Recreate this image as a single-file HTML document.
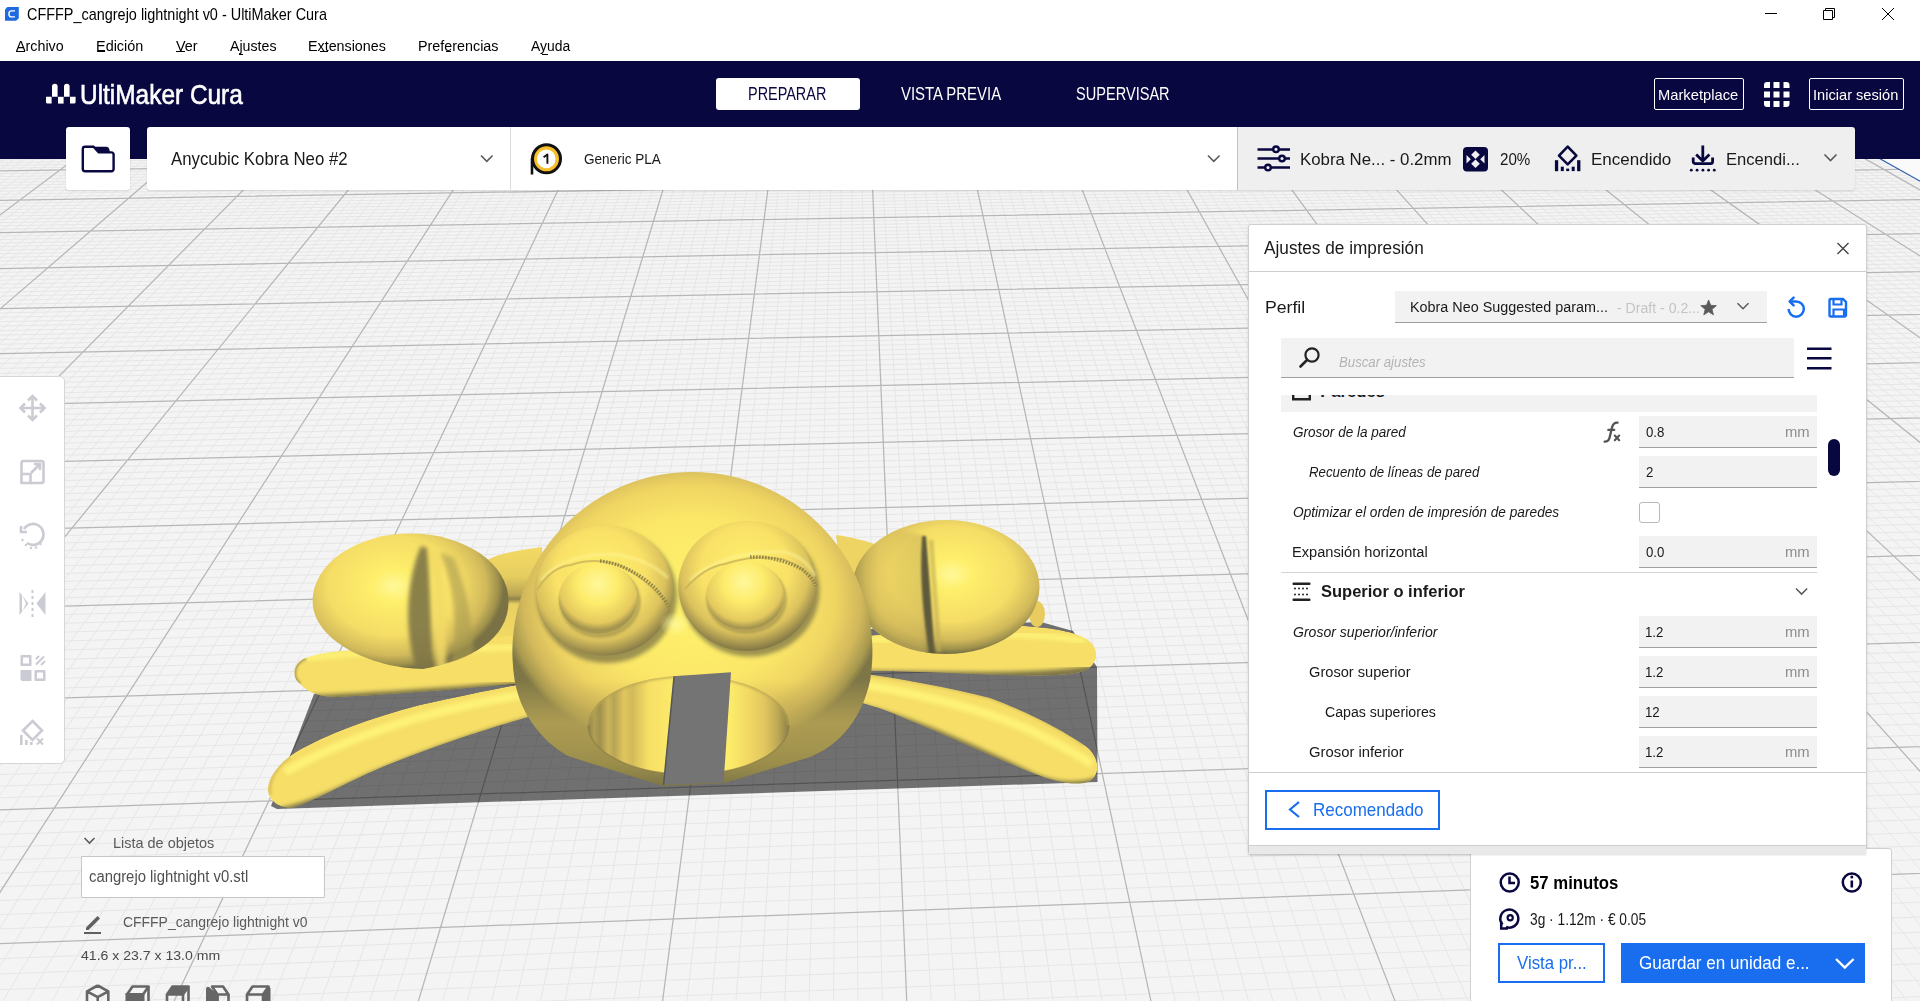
<!DOCTYPE html>
<html><head><meta charset="utf-8"><style>
*{margin:0;padding:0;box-sizing:border-box}
html,body{width:1920px;height:1001px;overflow:hidden;background:#fafafa;font-family:"Liberation Sans", sans-serif}
.t{position:absolute;white-space:pre;line-height:1;transform-origin:0 0}
.a{position:absolute}
svg{position:absolute;left:0;top:0}
</style></head><body>
<svg width="1920" height="1001" viewBox="0 0 1920 1001">
<polygon points="-293.1,143.6 1798.3,112.9 3843.4,1259.4 -3274.2,1618.4" fill="#f4f4f4"/>
<path d="M-283.1 143.4L-3235.2 1616.4M-273.1 143.3L-3196.2 1614.5M-263.1 143.1L-3157.3 1612.5M-253.1 143.0L-3118.5 1610.6M-243.2 142.8L-3079.8 1608.6M-233.2 142.7L-3041.1 1606.7M-223.2 142.5L-3002.5 1604.7M-213.2 142.4L-2964.0 1602.8M-203.3 142.3L-2925.5 1600.8M-183.4 142.0L-2848.9 1597.0M-173.4 141.8L-2810.7 1595.0M-163.5 141.7L-2772.5 1593.1M-153.6 141.5L-2734.4 1591.2M-143.6 141.4L-2696.4 1589.3M-133.7 141.2L-2658.5 1587.4M-123.8 141.1L-2620.7 1585.5M-113.9 140.9L-2582.9 1583.5M-104.0 140.8L-2545.2 1581.6M-84.2 140.5L-2470.0 1577.9M-74.3 140.4L-2432.5 1576.0M-64.4 140.2L-2395.1 1574.1M-54.5 140.1L-2357.7 1572.2M-44.6 139.9L-2320.4 1570.3M-34.8 139.8L-2283.2 1568.4M-24.9 139.6L-2246.1 1566.6M-15.0 139.5L-2209.0 1564.7M-5.2 139.3L-2172.0 1562.8M14.5 139.1L-2098.3 1559.1M24.3 138.9L-2061.5 1557.3M34.2 138.8L-2024.8 1555.4M44.0 138.6L-1988.1 1553.6M53.8 138.5L-1951.5 1551.7M63.6 138.3L-1915.0 1549.9M73.5 138.2L-1878.6 1548.0M83.3 138.0L-1842.2 1546.2M93.1 137.9L-1805.9 1544.4M112.7 137.6L-1733.5 1540.7M122.4 137.5L-1697.4 1538.9M132.2 137.3L-1661.4 1537.1M142.0 137.2L-1625.4 1535.3M151.8 137.0L-1589.5 1533.5M161.5 136.9L-1553.7 1531.6M171.3 136.8L-1518.0 1529.8M181.1 136.6L-1482.3 1528.0M190.8 136.5L-1446.6 1526.2M210.3 136.2L-1375.6 1522.7M220.0 136.0L-1340.1 1520.9M229.8 135.9L-1304.8 1519.1M239.5 135.8L-1269.5 1517.3M249.2 135.6L-1234.2 1515.5M258.9 135.5L-1199.1 1513.8M268.6 135.3L-1164.0 1512.0M278.3 135.2L-1128.9 1510.2M288.0 135.0L-1094.0 1508.5M307.4 134.8L-1024.2 1504.9M317.1 134.6L-989.4 1503.2M326.8 134.5L-954.7 1501.4M336.4 134.3L-920.1 1499.7M346.1 134.2L-885.5 1497.9M355.8 134.0L-850.9 1496.2M365.4 133.9L-816.5 1494.5M375.1 133.8L-782.1 1492.7M384.7 133.6L-747.7 1491.0M404.0 133.3L-679.3 1487.5M413.6 133.2L-645.1 1485.8M423.2 133.1L-611.0 1484.1M432.9 132.9L-577.0 1482.4M442.5 132.8L-543.0 1480.7M452.1 132.6L-509.1 1479.0M461.7 132.5L-475.3 1477.3M471.3 132.3L-441.5 1475.6M480.9 132.2L-407.8 1473.9M500.1 131.9L-340.6 1470.5M509.7 131.8L-307.0 1468.8M519.2 131.6L-273.6 1467.1M528.8 131.5L-240.1 1465.4M538.4 131.4L-206.8 1463.7M547.9 131.2L-173.5 1462.0M557.5 131.1L-140.3 1460.4M567.0 130.9L-107.1 1458.7M576.6 130.8L-74.0 1457.0M595.7 130.5L-7.9 1453.7M605.2 130.4L25.0 1452.0M614.7 130.2L57.9 1450.4M624.2 130.1L90.7 1448.7M633.7 130.0L123.5 1447.1M643.3 129.8L156.2 1445.4M652.8 129.7L188.8 1443.8M662.3 129.5L221.4 1442.1M671.8 129.4L253.9 1440.5M690.7 129.1L318.8 1437.2M700.2 129.0L351.1 1435.6M709.7 128.8L383.4 1433.9M719.2 128.7L415.7 1432.3M728.6 128.6L447.9 1430.7M738.1 128.4L480.0 1429.1M747.5 128.3L512.0 1427.5M757.0 128.2L544.1 1425.8M766.4 128.0L576.0 1424.2M785.3 127.7L639.7 1421.0M794.7 127.6L671.5 1419.4M804.2 127.5L703.3 1417.8M813.6 127.3L734.9 1416.2M823.0 127.2L766.6 1414.6M832.4 127.0L798.1 1413.0M841.8 126.9L829.6 1411.4M851.2 126.8L861.1 1409.9M860.6 126.6L892.5 1408.3M879.4 126.4L955.1 1405.1M888.8 126.2L986.3 1403.5M898.1 126.1L1017.5 1402.0M907.5 125.9L1048.6 1400.4M916.9 125.8L1079.7 1398.8M926.2 125.7L1110.7 1397.3M935.6 125.5L1141.7 1395.7M945.0 125.4L1172.6 1394.1M954.3 125.3L1203.5 1392.6M973.0 125.0L1265.0 1389.5M982.3 124.8L1295.7 1387.9M991.6 124.7L1326.3 1386.4M1001.0 124.6L1356.9 1384.8M1010.3 124.4L1387.5 1383.3M1019.6 124.3L1418.0 1381.8M1028.9 124.2L1448.4 1380.2M1038.2 124.0L1478.8 1378.7M1047.5 123.9L1509.1 1377.2M1066.1 123.6L1569.6 1374.1M1075.4 123.5L1599.8 1372.6M1084.6 123.3L1629.9 1371.1M1093.9 123.2L1659.9 1369.6M1103.2 123.1L1690.0 1368.1M1112.5 122.9L1719.9 1366.5M1121.7 122.8L1749.8 1365.0M1131.0 122.7L1779.7 1363.5M1140.2 122.5L1809.5 1362.0M1158.7 122.3L1869.0 1359.0M1167.9 122.1L1898.6 1357.5M1177.2 122.0L1928.3 1356.0M1186.4 121.8L1957.8 1354.5M1195.6 121.7L1987.3 1353.1M1204.8 121.6L2016.8 1351.6M1214.0 121.4L2046.2 1350.1M1223.3 121.3L2075.5 1348.6M1232.5 121.2L2104.9 1347.1M1250.8 120.9L2163.3 1344.2M1260.0 120.8L2192.5 1342.7M1269.2 120.6L2221.6 1341.2M1278.4 120.5L2250.7 1339.8M1287.6 120.4L2279.7 1338.3M1296.7 120.2L2308.6 1336.8M1305.9 120.1L2337.6 1335.4M1315.1 120.0L2366.4 1333.9M1324.2 119.8L2395.3 1332.5M1342.5 119.6L2452.8 1329.6M1351.7 119.4L2481.4 1328.1M1360.8 119.3L2510.1 1326.7M1369.9 119.1L2538.6 1325.3M1379.0 119.0L2567.2 1323.8M1388.2 118.9L2595.7 1322.4M1397.3 118.7L2624.1 1320.9M1406.4 118.6L2652.5 1319.5M1415.5 118.5L2680.8 1318.1M1433.7 118.2L2737.4 1315.2M1442.8 118.1L2765.6 1313.8M1451.9 117.9L2793.7 1312.4M1461.0 117.8L2821.8 1311.0M1470.1 117.7L2849.9 1309.6M1479.1 117.5L2877.9 1308.1M1488.2 117.4L2905.9 1306.7M1497.3 117.3L2933.8 1305.3M1506.3 117.1L2961.7 1303.9M1524.4 116.9L3017.3 1301.1M1533.5 116.7L3045.0 1299.7M1542.5 116.6L3072.7 1298.3M1551.6 116.5L3100.4 1296.9M1560.6 116.3L3128.0 1295.5M1569.6 116.2L3155.6 1294.1M1578.6 116.1L3183.1 1292.7M1587.7 116.0L3210.5 1291.4M1596.7 115.8L3238.0 1290.0M1614.7 115.6L3292.7 1287.2M1623.7 115.4L3320.0 1285.8M1632.7 115.3L3347.2 1284.5M1641.7 115.2L3374.4 1283.1M1650.7 115.0L3401.6 1281.7M1659.6 114.9L3428.7 1280.4M1668.6 114.8L3455.7 1279.0M1677.6 114.6L3482.8 1277.6M1686.6 114.5L3509.7 1276.3M1704.5 114.2L3563.6 1273.6M1713.4 114.1L3590.4 1272.2M1722.4 114.0L3617.2 1270.9M1731.3 113.8L3644.0 1269.5M1740.3 113.7L3670.7 1268.2M1749.2 113.6L3697.4 1266.8M1758.1 113.4L3724.0 1265.5M1767.1 113.3L3750.6 1264.1M1776.0 113.2L3777.2 1262.8M-293.1 143.6L1798.3 112.9M-298.4 146.2L1802.4 115.2M-309.1 151.5L1810.9 119.9M-314.5 154.2L1815.1 122.3M-320.0 156.9L1819.4 124.7M-325.5 159.6L1823.8 127.1M-331.1 162.4L1828.1 129.6M-336.8 165.2L1832.6 132.1M-342.5 168.0L1837.0 134.6M-348.2 170.8L1841.5 137.1M-354.0 173.7L1846.1 139.6M-365.8 179.5L1855.3 144.8M-371.7 182.5L1859.9 147.4M-377.8 185.4L1864.6 150.1M-383.9 188.5L1869.4 152.7M-390.0 191.5L1874.2 155.4M-396.2 194.6L1879.0 158.1M-402.5 197.7L1883.9 160.9M-408.9 200.8L1888.9 163.6M-415.3 204.0L1893.9 166.4M-428.3 210.4L1904.0 172.1M-434.9 213.7L1909.1 175.0M-441.6 217.0L1914.3 177.9M-448.3 220.3L1919.5 180.8M-455.1 223.7L1924.8 183.8M-462.0 227.1L1930.1 186.8M-469.0 230.6L1935.5 189.8M-476.0 234.0L1941.0 192.8M-483.1 237.6L1946.5 195.9M-497.6 244.7L1957.6 202.2M-504.9 248.3L1963.3 205.4M-512.3 252.0L1969.0 208.6M-519.8 255.7L1974.8 211.8M-527.4 259.5L1980.6 215.1M-535.1 263.3L1986.5 218.4M-542.9 267.1L1992.5 221.7M-550.7 271.0L1998.5 225.1M-558.7 274.9L2004.6 228.5M-574.8 282.9L2017.0 235.5M-583.0 287.0L2023.3 239.0M-591.3 291.1L2029.6 242.6M-599.8 295.3L2036.1 246.2M-608.3 299.5L2042.6 249.8M-616.9 303.7L2049.1 253.5M-625.6 308.0L2055.8 257.2M-634.4 312.4L2062.5 261.0M-643.3 316.8L2069.3 264.8M-661.5 325.8L2083.1 272.5M-670.7 330.4L2090.1 276.5M-680.1 335.0L2097.2 280.5M-689.6 339.7L2104.4 284.5M-699.2 344.5L2111.7 288.6M-708.9 349.3L2119.0 292.7M-718.8 354.1L2126.4 296.8M-728.7 359.1L2134.0 301.1M-738.8 364.1L2141.6 305.3M-759.4 374.3L2157.1 314.0M-769.9 379.5L2165.0 318.4M-780.5 384.7L2173.0 322.9M-791.3 390.0L2181.0 327.5M-802.2 395.4L2189.2 332.0M-813.3 400.9L2197.5 336.7M-824.5 406.5L2205.9 341.4M-835.9 412.1L2214.4 346.2M-847.4 417.8L2223.0 351.0M-870.9 429.4L2240.5 360.8M-882.9 435.4L2249.4 365.8M-895.1 441.4L2258.5 370.9M-907.5 447.5L2267.7 376.0M-920.0 453.7L2276.9 381.2M-932.7 460.0L2286.3 386.5M-945.6 466.4L2295.9 391.8M-958.7 472.8L2305.5 397.3M-972.0 479.4L2315.3 402.7M-999.1 492.8L2335.3 413.9M-1013.0 499.7L2345.5 419.7M-1027.1 506.7L2355.8 425.4M-1041.4 513.7L2366.3 431.3M-1055.9 520.9L2376.9 437.3M-1070.6 528.2L2387.7 443.3M-1085.6 535.6L2398.6 449.4M-1100.8 543.2L2409.7 455.6M-1116.3 550.8L2420.9 462.0M-1147.9 566.5L2443.9 474.8M-1164.1 574.5L2455.6 481.4M-1180.6 582.6L2467.6 488.1M-1197.4 590.9L2479.6 494.9M-1214.4 599.4L2491.9 501.8M-1231.7 607.9L2504.4 508.7M-1249.3 616.6L2517.0 515.8M-1267.2 625.5L2529.9 523.0M-1285.4 634.5L2542.9 530.3M-1322.8 653.0L2569.6 545.3M-1342.0 662.5L2583.3 553.0M-1361.6 672.2L2597.2 560.8M-1381.5 682.0L2611.3 568.7M-1401.7 692.0L2625.6 576.7M-1422.3 702.2L2640.2 584.9M-1443.3 712.6L2655.0 593.2M-1464.7 723.2L2670.1 601.6M-1486.5 734.0L2685.4 610.2M-1531.4 756.2L2716.8 627.8M-1554.5 767.6L2732.9 636.9M-1578.0 779.2L2749.3 646.1M-1602.0 791.1L2766.0 655.4M-1626.5 803.2L2783.0 664.9M-1651.5 815.6L2800.3 674.6M-1676.9 828.2L2817.9 684.5M-1702.9 841.1L2835.8 694.5M-1729.5 854.2L2854.0 704.8M-1784.3 881.3L2891.5 725.8M-1812.6 895.3L2910.8 736.6M-1841.5 909.6L2930.4 747.6M-1871.0 924.2L2950.5 758.8M-1901.2 939.1L2970.9 770.3M-1932.0 954.4L2991.7 782.0M-1963.6 970.0L3012.9 793.9M-1995.9 986.0L3034.6 806.0M-2028.9 1002.3L3056.7 818.4M-2097.4 1036.2L3102.2 843.9M-2132.8 1053.7L3125.7 857.1M-2169.1 1071.7L3149.7 870.5M-2206.4 1090.1L3174.2 884.3M-2244.5 1109.0L3199.2 898.3M-2283.6 1128.3L3224.7 912.6M-2323.7 1148.2L3250.9 927.3M-2364.9 1168.5L3277.6 942.2M-2407.1 1189.4L3304.9 957.5M-2495.0 1232.9L3361.3 989.2M-2540.8 1255.5L3390.6 1005.6M-2587.8 1278.8L3420.5 1022.4M-2636.1 1302.7L3451.1 1039.5M-2685.9 1327.3L3482.5 1057.1M-2737.0 1352.6L3514.6 1075.1M-2789.7 1378.7L3547.5 1093.6M-2843.9 1405.5L3581.3 1112.5M-2899.8 1433.2L3615.9 1131.9M-3016.8 1491.1L3687.8 1172.2M-3078.1 1521.4L3725.1 1193.2M-3141.4 1552.7L3763.5 1214.7M-3206.7 1585.0L3802.9 1236.8M-3274.2 1618.4L3843.4 1259.4" stroke="#e6e6e6" stroke-width="1" fill="none"/>
<path d="M-293.1 143.6L-3274.2 1618.4M-193.3 142.1L-2887.2 1598.9M-94.1 140.6L-2507.5 1579.7M4.7 139.2L-2135.1 1561.0M102.9 137.8L-1769.7 1542.5M200.5 136.3L-1411.1 1524.4M297.7 134.9L-1059.1 1506.7M394.4 133.5L-713.5 1489.3M490.5 132.1L-374.2 1472.2M586.1 130.7L-40.9 1455.3M681.2 129.3L286.4 1438.8M775.9 127.9L607.9 1422.6M870.0 126.5L923.8 1406.7M963.6 125.1L1234.3 1391.0M1056.8 123.7L1539.4 1375.6M1149.5 122.4L1839.3 1360.5M1241.7 121.0L2134.1 1345.7M1333.4 119.7L2424.0 1331.0M1424.6 118.3L2709.1 1316.7M1515.4 117.0L2989.5 1302.5M1605.7 115.7L3265.3 1288.6M1695.5 114.4L3536.7 1274.9M1784.9 113.1L3803.7 1261.5M-303.7 148.8L1806.6 117.5M-359.9 176.6L1850.6 142.2M-421.7 207.2L1898.9 169.3M-490.3 241.1L1952.0 199.0M-566.7 278.9L2010.8 232.0M-652.3 321.3L2076.1 268.6M-749.1 369.1L2149.3 309.7M-859.1 423.6L2231.7 355.9M-985.4 486.1L2325.2 408.3M-1132.0 558.6L2432.3 468.3M-1304.0 643.7L2556.2 537.8M-1508.7 745.0L2701.0 619.0M-1756.6 867.6L2872.6 715.2M-2062.7 1019.1L3079.2 831.0M-2450.5 1210.9L3332.8 973.2M-2957.4 1461.7L3651.4 1151.8" stroke="#b6b6b6" stroke-width="1.25" fill="none"/>
<path d="M1798.3 112.9L3843.4 1259.4" stroke="#2a5bb0" stroke-width="1.2" fill="none"/>
<defs>
<radialGradient id="gClawL" cx="394" cy="586" r="110" gradientUnits="userSpaceOnUse" gradientTransform="translate(394 586) scale(1 0.75) translate(-394 -586)">
<stop offset="0" stop-color="#fff89a"/><stop offset="0.2" stop-color="#feef6b"/><stop offset="0.6" stop-color="#f5dd66"/><stop offset="0.84" stop-color="#d1b95b"/><stop offset="0.95" stop-color="#9e914c"/><stop offset="1" stop-color="#7a7244"/>
</radialGradient>
<radialGradient id="gClawR" cx="952" cy="574" r="104" gradientUnits="userSpaceOnUse" gradientTransform="translate(952 574) scale(1 0.76) translate(-952 -574)">
<stop offset="0" stop-color="#fff89a"/><stop offset="0.2" stop-color="#feef6b"/><stop offset="0.6" stop-color="#f5dd66"/><stop offset="0.84" stop-color="#d1b95b"/><stop offset="0.95" stop-color="#9e914c"/><stop offset="1" stop-color="#7a7244"/>
</radialGradient>
<radialGradient id="gBody" cx="692" cy="600" r="192" gradientUnits="userSpaceOnUse" gradientTransform="translate(692 600) scale(1 0.8) translate(-692 -600)">
<stop offset="0" stop-color="#fff46c"/><stop offset="0.55" stop-color="#fbe668"/><stop offset="0.75" stop-color="#efd462"/><stop offset="0.88" stop-color="#d2b85b"/><stop offset="0.96" stop-color="#a8994f"/><stop offset="1" stop-color="#7e7646"/>
</radialGradient>
<radialGradient id="gEyeL" cx="600" cy="575" r="82" gradientUnits="userSpaceOnUse">
<stop offset="0" stop-color="#fef06b"/><stop offset="0.55" stop-color="#f9e167"/><stop offset="0.8" stop-color="#dac15d"/><stop offset="1" stop-color="#857a47"/>
</radialGradient>
<radialGradient id="gEyeR" cx="745" cy="570" r="80" gradientUnits="userSpaceOnUse">
<stop offset="0" stop-color="#fef06b"/><stop offset="0.55" stop-color="#f9e167"/><stop offset="0.8" stop-color="#dac15d"/><stop offset="1" stop-color="#857a47"/>
</radialGradient>
<radialGradient id="gBallL" cx="598" cy="584" r="46" gradientUnits="userSpaceOnUse">
<stop offset="0" stop-color="#fff89a"/><stop offset="0.45" stop-color="#fdeb6a"/><stop offset="0.85" stop-color="#e4c95f"/><stop offset="1" stop-color="#a5954f"/>
</radialGradient>
<radialGradient id="gBallR" cx="744" cy="582" r="46" gradientUnits="userSpaceOnUse">
<stop offset="0" stop-color="#fff89a"/><stop offset="0.45" stop-color="#fdeb6a"/><stop offset="0.85" stop-color="#e4c95f"/><stop offset="1" stop-color="#a5954f"/>
</radialGradient>
<linearGradient id="gLL" x1="404" y1="702" x2="424" y2="757" gradientUnits="userSpaceOnUse">
<stop offset="0" stop-color="#e0c65e"/><stop offset="0.22" stop-color="#fff57a"/><stop offset="0.55" stop-color="#fae368"/><stop offset="0.78" stop-color="#d4bb5b"/><stop offset="0.92" stop-color="#9a8d4b"/><stop offset="1" stop-color="#6e6842"/>
</linearGradient>
<linearGradient id="gLU" x1="0" y1="648" x2="0" y2="698" gradientUnits="userSpaceOnUse">
<stop offset="0" stop-color="#e9cd60"/><stop offset="0.25" stop-color="#fef06b"/><stop offset="0.55" stop-color="#f9e267"/><stop offset="0.76" stop-color="#d1b95b"/><stop offset="0.9" stop-color="#9a8d4b"/><stop offset="1" stop-color="#6e6842"/>
</linearGradient>
<linearGradient id="gRU" x1="0" y1="626" x2="0" y2="677" gradientUnits="userSpaceOnUse">
<stop offset="0" stop-color="#e9cd60"/><stop offset="0.25" stop-color="#fef06b"/><stop offset="0.55" stop-color="#f9e267"/><stop offset="0.76" stop-color="#d1b95b"/><stop offset="0.9" stop-color="#9a8d4b"/><stop offset="1" stop-color="#6e6842"/>
</linearGradient>
<linearGradient id="gRL" x1="975" y1="690" x2="958" y2="745" gradientUnits="userSpaceOnUse">
<stop offset="0" stop-color="#e0c65e"/><stop offset="0.22" stop-color="#fff57a"/><stop offset="0.55" stop-color="#fae368"/><stop offset="0.78" stop-color="#d4bb5b"/><stop offset="0.92" stop-color="#9a8d4b"/><stop offset="1" stop-color="#6e6842"/>
</linearGradient>
<linearGradient id="gMouth" x1="588" y1="0" x2="789" y2="0" gradientUnits="userSpaceOnUse">
<stop offset="0" stop-color="#8b7f48"/><stop offset="0.03" stop-color="#b19f52"/><stop offset="0.06" stop-color="#a0914e"/><stop offset="0.1" stop-color="#ccb55a"/><stop offset="0.13" stop-color="#b7a454"/><stop offset="0.18" stop-color="#e1c65e"/><stop offset="0.22" stop-color="#d2ba5b"/><stop offset="0.3" stop-color="#f7df66"/><stop offset="0.45" stop-color="#fded6a"/><stop offset="0.7" stop-color="#fded6a"/><stop offset="0.8" stop-color="#f2d864"/><stop offset="0.88" stop-color="#e1c65e"/><stop offset="0.94" stop-color="#c0ab56"/><stop offset="1" stop-color="#8b7f48"/>
</linearGradient>
<linearGradient id="gLow" x1="0" y1="680" x2="0" y2="786" gradientUnits="userSpaceOnUse">
<stop offset="0" stop-color="#c5af58" stop-opacity="0"/><stop offset="0.4" stop-color="#bba755" stop-opacity="0.75"/><stop offset="0.8" stop-color="#9a8d4b"/><stop offset="1" stop-color="#7e7646"/>
</linearGradient>
<linearGradient id="gLip" x1="0" y1="674" x2="0" y2="700" gradientUnits="userSpaceOnUse">
<stop offset="0" stop-color="#e1c65e"/><stop offset="1" stop-color="#e1c65e" stop-opacity="0"/>
</linearGradient>
<linearGradient id="gBand" x1="0" y1="740" x2="0" y2="786" gradientUnits="userSpaceOnUse">
<stop offset="0" stop-color="#c5af58" stop-opacity="0"/><stop offset="0.5" stop-color="#b19f52"/><stop offset="1" stop-color="#8b7f48"/>
</linearGradient>
<linearGradient id="gGroove" x1="405" y1="0" x2="465" y2="0" gradientUnits="userSpaceOnUse">
<stop offset="0" stop-color="#cab359" stop-opacity="0"/><stop offset="0.18" stop-color="#8a7e48"/><stop offset="0.33" stop-color="#9b8d4d"/><stop offset="0.45" stop-color="#ecd162"/><stop offset="0.62" stop-color="#c2ad57"/><stop offset="0.8" stop-color="#b6a354"/><stop offset="1" stop-color="#d9c05d" stop-opacity="0"/>
</linearGradient>
<linearGradient id="gClawRL" x1="855" y1="0" x2="935" y2="0" gradientUnits="userSpaceOnUse">
<stop offset="0" stop-color="#b4a153" stop-opacity="0.5"/><stop offset="0.3" stop-color="#e8cc60" stop-opacity="0.5"/><stop offset="0.85" stop-color="#cab359" stop-opacity="0.6"/><stop offset="1" stop-color="#6a6440"/>
</linearGradient>
<clipPath id="cClawL"><ellipse cx="410.6" cy="601" rx="98" ry="67.5"/></clipPath>
<clipPath id="cClawR"><ellipse cx="946" cy="587" rx="93.5" ry="67"/></clipPath>
<clipPath id="cMouth"><ellipse cx="688.5" cy="725" rx="100.5" ry="49.5"/></clipPath>
<radialGradient id="gNose" cx="0.5" cy="0.5" r="0.5"><stop offset="0" stop-color="#fff89a" stop-opacity="0.85"/><stop offset="1" stop-color="#fff89a" stop-opacity="0"/></radialGradient>
<clipPath id="cBody"><path d="M514.6 680 A180 180 0 1 1 870.2 680 C862 718 840 745 810 757 L724 783 L663 786 L568 756 C540 740 520 712 514.6 680z"/></clipPath>
<filter id="fb2" x="-50%" y="-10%" width="200%" height="120%"><feGaussianBlur stdDeviation="2.2"/></filter>
<filter id="fb1" x="-50%" y="-10%" width="200%" height="120%"><feGaussianBlur stdDeviation="1"/></filter>
<linearGradient id="gBackL" x1="0" y1="548" x2="0" y2="650" gradientUnits="userSpaceOnUse">
<stop offset="0" stop-color="#f3da65"/><stop offset="0.28" stop-color="#e6cd60"/><stop offset="0.46" stop-color="#b8a454"/><stop offset="0.5" stop-color="#8e8249"/><stop offset="0.55" stop-color="#e8cf62"/><stop offset="0.9" stop-color="#f3da65"/><stop offset="1" stop-color="#d4bb5b"/>
</linearGradient>
<clipPath id="cLU"><path d="M300 684 C291 678 293 662 306 658 C322 651 350 650 400 647 L505 636 L545 640 L545 681 C480 687 420 693 340 697 C318 698 306 691 300 684z"/></clipPath><clipPath id="cRU"><path d="M865 636 L1000 625 C1040 626 1070 630 1085 638 C1099 646 1100 661 1088 669 C1075 676 1050 676 1000 675 C950 673 900 671 865 671z"/></clipPath><clipPath id="cLL"><path d="M292 808 C276 808 267 798 268 788 C269 776 280 762 296 752 C325 735 370 718 420 705 C460 696 500 688 522 684 L548 700 L532 716 C490 728 445 742 390 764 C350 780 318 800 292 808z"/></clipPath><clipPath id="cRL"><path d="M856 673 C900 678 950 688 990 698 C1030 713 1062 730 1084 745 C1100 755 1102 776 1088 782 C1075 786 1055 782 1035 774 C995 758 950 737 892 713 C880 708 866 704 856 702z"/></clipPath>
</defs>
<!-- shadow -->
<polygon points="314,694 600,640 1041,622 1073,631 1097,667 1097.5,782 277,809 271,806" fill="#000" fill-opacity="0.54"/>
<!-- back legs behind body -->
<path d="M484 562 C495 554 520 550 542 547 L548 684 L486 684z" fill="url(#gBackL)"/>
<path d="M836 535 C850 537 868 541 880 546 L885 610 L850 640z" fill="#eed463"/>
<ellipse cx="1037" cy="614" rx="8" ry="13" fill="#e8cc60"/>
<!-- upper legs -->
<g clip-path="url(#cLU)">
<path d="M300 684 C291 678 293 662 306 658 C322 651 350 650 400 647 L505 636 L545 640 L545 681 C480 687 420 693 340 697 C318 698 306 691 300 684z" fill="#f6de67"/>
<path d="M290 700 C330 700 420 694 545 684" stroke="#7e7646" stroke-width="9" fill="none" filter="url(#fb2)"/>
<path d="M296 660 C320 654 380 652 545 646" stroke="#fff57a" stroke-width="7" fill="none" filter="url(#fb2)" opacity="0.8"/>
<path d="M300 684 C291 678 293 662 306 658" stroke="#b8a454" stroke-width="4" fill="none" filter="url(#fb1)"/>
</g>
<g clip-path="url(#cRU)">
<path d="M865 636 L1000 625 C1040 626 1070 630 1085 638 C1099 646 1100 661 1088 669 C1075 676 1050 676 1000 675 C950 673 900 671 865 671z" fill="#f6de67"/>
<path d="M860 675 C950 676 1050 680 1102 668" stroke="#7e7646" stroke-width="9" fill="none" filter="url(#fb2)"/>
<path d="M870 640 C950 634 1040 630 1085 642" stroke="#fff57a" stroke-width="7" fill="none" filter="url(#fb2)" opacity="0.8"/>
</g>
<!-- lower legs -->
<g clip-path="url(#cLL)">
<path d="M292 808 C276 808 267 798 268 788 C269 776 280 762 296 752 C325 735 370 718 420 705 C460 696 500 688 522 684 L548 700 L532 716 C490 728 445 742 390 764 C350 780 318 800 292 808z" fill="#f6de67"/>
<path d="M280 812 C320 804 350 784 392 768 C445 746 490 732 540 718" stroke="#7e7646" stroke-width="8" fill="none" filter="url(#fb2)"/>
<path d="M285 772 C320 752 370 732 420 717 C460 706 500 698 540 692" stroke="#fff57a" stroke-width="9" fill="none" filter="url(#fb2)" opacity="0.85"/>
<path d="M270 795 C268 780 276 766 290 757" stroke="#d4bb5b" stroke-width="4" fill="none" filter="url(#fb1)" opacity="0.7"/>
</g>
<g clip-path="url(#cRL)">
<path d="M856 673 C900 678 950 688 990 698 C1030 713 1062 730 1084 745 C1100 755 1102 776 1088 782 C1075 786 1055 782 1035 774 C995 758 950 737 892 713 C880 708 866 704 856 702z" fill="#f6de67"/>
<path d="M850 706 C900 716 960 742 1035 778 C1060 788 1085 788 1104 778" stroke="#7e7646" stroke-width="8" fill="none" filter="url(#fb2)"/>
<path d="M860 684 C920 694 980 708 1030 730 C1060 745 1080 756 1092 764" stroke="#fff57a" stroke-width="9" fill="none" filter="url(#fb2)" opacity="0.85"/>
<path d="M856 673 C900 678 950 688 990 698 C1030 713 1062 730 1084 745" stroke="#d4bb5b" stroke-width="3" fill="none" filter="url(#fb1)" opacity="0.7"/>
</g>
<!-- claws -->
<path d="M312.6 601 A98 67.5 0 0 1 508.6 601 C508.6 640 470 660 423 669 C370 668 312.6 640 312.6 601z" fill="url(#gClawL)"/>
<g clip-path="url(#cClawL)"><g filter="url(#fb2)">
<path d="M421 546 C406 580 404 630 416 668 L434 668 C430 630 431 585 427 548z" fill="#7e7646" opacity="0.9"/>
<path d="M430 550 C436 590 434 630 436 668 L446 668 C447 630 446 590 438 552z" fill="#f3da65" opacity="0.8"/>
<path d="M440 552 C456 590 458 630 450 668 L474 668 C474 630 468 590 454 558z" fill="#a89a50" opacity="0.6"/>
</g></g>
<ellipse cx="946" cy="587" rx="93.5" ry="67" fill="url(#gClawR)"/>
<g clip-path="url(#cClawR)">
<path d="M850 520 L922 535 C924 580 927 620 931 660 L850 660z" fill="url(#gClawRL)" filter="url(#fb2)"/>
<path d="M922 536 C919 580 924 620 929 654 L935 654 C932 620 930 580 926 536z" fill="#5f5a3a" filter="url(#fb1)"/>
<path d="M931 540 C934 580 937 620 939 652" stroke="#c2ad57" stroke-width="5" fill="none" opacity="0.6" filter="url(#fb1)"/>
</g>
<!-- body -->
<path d="M514.6 680 A180 180 0 1 1 870.2 680 C862 718 840 745 810 757 L724 783 L663 786 L568 756 C540 740 520 712 514.6 680z" fill="url(#gBody)"/>
<!-- eye sockets -->
<ellipse cx="607" cy="596" rx="70" ry="67" fill="#7e7646" opacity="0.75" filter="url(#fb2)"/>
<ellipse cx="750" cy="591" rx="69.5" ry="65.5" fill="#7e7646" opacity="0.75" filter="url(#fb2)"/>
<ellipse cx="604.7" cy="590.6" rx="68.5" ry="65" fill="url(#gEyeL)"/>
<ellipse cx="747" cy="586" rx="68.7" ry="65" fill="url(#gEyeR)"/>
<ellipse cx="600" cy="602" rx="41" ry="36" fill="#8e8249" opacity="0.5" filter="url(#fb1)"/>
<ellipse cx="746.5" cy="599" rx="40.5" ry="35" fill="#8e8249" opacity="0.5" filter="url(#fb1)"/>
<ellipse cx="598" cy="598.5" rx="39.3" ry="35" fill="url(#gBallL)"/>
<ellipse cx="745" cy="596" rx="39" ry="33.5" fill="url(#gBallR)"/>
<path d="M541 580 C556 562 585 552 618 555 C640 558 655 566 668 578" stroke="#fff69a" stroke-width="3" fill="none" opacity="0.55" filter="url(#fb1)"/>
<path d="M690 580 C712 560 748 550 785 552 C800 556 810 566 815 576" stroke="#fff69a" stroke-width="3" fill="none" opacity="0.55" filter="url(#fb1)"/>
<path d="M537 590 C548 572 560 566 571 565 C590 558 615 560 632 572 C648 582 660 595 669 607" stroke="#c9b35a" stroke-width="2" fill="none" opacity="0.8"/>
<path d="M600 561 C620 563 640 574 655 588 C662 596 666 602 669 607" stroke="#8a7e48" stroke-width="3.5" fill="none" stroke-dasharray="1.6 1.4" opacity="0.9"/>
<path d="M685 589 C698 574 712 566 725 564 C745 557 768 556 782 559 C797 564 809 573 816 586" stroke="#c9b35a" stroke-width="2" fill="none" opacity="0.8"/>
<path d="M750 557 C770 556 790 562 803 570 C810 576 814 581 816 586" stroke="#8a7e48" stroke-width="3.5" fill="none" stroke-dasharray="1.6 1.4" opacity="0.9"/>
<ellipse cx="675" cy="624" rx="16" ry="12" fill="url(#gNose)"/>
<!-- mouth -->
<rect x="500" y="680" width="380" height="110" fill="url(#gLow)" clip-path="url(#cBody)"/>
<ellipse cx="688.5" cy="725" rx="100.5" ry="49.5" fill="url(#gMouth)"/>
<g clip-path="url(#cMouth)">
<path d="M588 725 A100.5 49.5 0 0 1 789 725" stroke="#b8a454" stroke-width="4" fill="none" opacity="0.7" filter="url(#fb1)"/>

</g>
<path d="M588 725 A100.5 49.5 0 0 0 789 725" stroke="#8b7f48" stroke-width="1.5" fill="none" opacity="0.7"/>
<polygon points="674.1,676.2 731,672.2 723.6,782.6 663.6,784.8" fill="#747474"/>
<path d="M674.1 676.2 L663.6 784.8" stroke="#555" stroke-width="1.5"/>

</svg>
<!-- title + menu -->
<div class="a" style="left:0;top:0;width:1920px;height:61px;background:#fff"></div>

<svg class="a" style="left:0;top:0" width="30" height="30" viewBox="0 0 30 30"><path d="M7.3 7H18.8V18.3L16.1 20.8H5V9.5z" fill="#1f6ae0"/><path d="M15 10.9H11.6A2.7 3 0 0 0 11.6 16.9H15" stroke="#fff" stroke-width="1.4" fill="none"/></svg>
<svg class="a" style="left:1760px;top:0" width="160" height="30" viewBox="1760 0 160 30">
<path d="M1765 13.5H1777" stroke="#000" stroke-width="1"/>
<path d="M1823.5 10.5h9v9h-9z" stroke="#000" stroke-width="1" fill="none"/>
<path d="M1825.5 10.5V8.5h9v9h-2" stroke="#000" stroke-width="1" fill="none"/>
<path d="M1882 8L1894 20M1894 8L1882 20" stroke="#000" stroke-width="1"/>
</svg>
<div class="a" style="left:16px;top:51px;width:9px;height:1px;background:#000"></div>
<div class="a" style="left:97px;top:51px;width:8px;height:1px;background:#000"></div>
<div class="a" style="left:176px;top:51px;width:9px;height:1px;background:#000"></div>
<div class="a" style="left:239px;top:54px;width:4px;height:1px;background:#000"></div>
<div class="a" style="left:320px;top:51px;width:8px;height:1px;background:#000"></div>
<div class="a" style="left:446px;top:51px;width:5px;height:1px;background:#000"></div>
<div class="a" style="left:542px;top:54px;width:6px;height:1px;background:#000"></div>

<!-- header -->
<div class="a" style="left:0;top:61px;width:1920px;height:97.5px;background:#08073f"></div>
<svg class="a" style="left:44px;top:82px" width="34" height="24" viewBox="44 82 34 24">
<g fill="#fff">
<path d="M46 96.8h5.6v6.8h-4a1.6 1.6 0 0 1-1.6-1.6z"/>
<path d="M52 86.6a2.8 2.8 0 0 1 5.6 0V96.8H52z"/>
<rect x="58" y="96.8" width="5.6" height="6.8"/>
<path d="M64 86.6a2.8 2.8 0 0 1 5.6 0V96.8H64z"/>
<path d="M70 96.8h5.6V102a1.6 1.6 0 0 1-1.6 1.6h-4z"/>
</g></svg>
<div class="a" style="left:716px;top:77.5px;width:144px;height:32.5px;background:#fff;border-radius:3px"></div>
<div class="a" style="left:1654px;top:78px;width:90px;height:32px;border:1.5px solid #fff;border-radius:2px"></div>
<div class="a" style="left:1809px;top:78px;width:95px;height:32px;border:1.5px solid #fff;border-radius:2px"></div>
<svg class="a" style="left:1763px;top:81px" width="28" height="27" viewBox="0 0 28 27">
<g fill="#fff">
<path d="M1 7V4a3 3 0 0 1 3-3h3v6z"/><rect x="10.5" y="1" width="6" height="6"/><path d="M20.5 1h3a3 3 0 0 1 3 3v3h-6z"/>
<rect x="1" y="10.5" width="6" height="6"/><rect x="10.5" y="10.5" width="6" height="6"/><rect x="20.5" y="10.5" width="6" height="6"/>
<path d="M1 20h6v6H4a3 3 0 0 1-3-3z"/><rect x="10.5" y="20" width="6" height="6"/><path d="M20.5 20h6v3a3 3 0 0 1-3 3h-3z"/>
</g></svg>

<!-- toolbar row -->
<div class="a" style="left:66px;top:127px;width:63.5px;height:63px;background:#fff;border-radius:3px;box-shadow:0 1px 2px rgba(0,0,0,.12)"></div>
<svg class="a" style="left:78px;top:142px" width="40" height="34" viewBox="78 142 40 34">
<path d="M82.8 149a2.2 2.2 0 0 1 2.2-2.2h8.6l5.2 5.6h12.6a2.2 2.2 0 0 1 2.2 2.2V169a2.2 2.2 0 0 1-2.2 2.2H85a2.2 2.2 0 0 1-2.2-2.2z" stroke="#08073f" stroke-width="2.4" fill="none" stroke-linejoin="round"/>
<path d="M93.2 146.8h13.2a3 3 0 0 1 3 2.6l.6 3.2H99z" fill="#08073f"/>
</svg>
<div class="a" style="left:147px;top:127px;width:1091px;height:63px;background:#fff;border-radius:3px 0 0 3px;box-shadow:0 1px 2px rgba(0,0,0,.12)"></div>
<div class="a" style="left:510px;top:127px;width:1px;height:63px;background:#dcdcdc"></div>
<div class="a" style="left:1237px;top:127px;width:1px;height:63px;background:#c8c8c8"></div>
<div class="a" style="left:1238px;top:127px;width:617px;height:63px;background:#efefef;border-radius:0 3px 3px 0;box-shadow:0 1px 2px rgba(0,0,0,.12)"></div>
<svg class="a" style="left:0;top:120px" width="1920" height="80" viewBox="0 120 1920 80">
<path d="M481 155.5L486.8 161.3L492.6 155.5" stroke="#5a5a5a" stroke-width="1.6" fill="none"/>
<path d="M1208 155.5L1213.8 161.3L1219.6 155.5" stroke="#5a5a5a" stroke-width="1.6" fill="none"/>
<path d="M1824.5 154.5L1830.5 160.5L1836.5 154.5" stroke="#5a5a5a" stroke-width="1.6" fill="none"/>
<!-- extruder icon -->
<circle cx="546.5" cy="158.8" r="14" fill="#f5c02b" stroke="#111" stroke-width="3"/>
<circle cx="546.3" cy="158.9" r="9.3" fill="#fff"/>
<path d="M532 158V174.5" stroke="#111" stroke-width="2.6"/>
<path d="M547.4 163.8V154.4L543.6 157.2" stroke="#111" stroke-width="1.9" fill="none" stroke-linejoin="round"/>
<!-- sliders -->
<g stroke="#08073f" stroke-width="2.4" fill="none">
<path d="M1257.5 149.5H1290M1257.5 158.5H1290M1257.5 167.5H1290"/>
</g>
<g fill="#efefef" stroke="#08073f" stroke-width="2.4">
<circle cx="1276" cy="149.3" r="2.8"/><circle cx="1282" cy="158.5" r="2.8"/><circle cx="1268" cy="167.6" r="2.8"/>
</g>
<!-- infill -->
<rect x="1463" y="147" width="25" height="24.5" rx="4" fill="#08073f"/>
<g fill="#efefef"><path d="M1475.5 150.5L1479.8 154.8L1475.5 159.1L1471.2 154.8z"/><path d="M1475.5 159.5L1479.8 163.8L1475.5 168.1L1471.2 163.8z"/>
<path d="M1466.5 155L1470.8 159.3L1466.5 163.6z"/><path d="M1484.5 155L1480.2 159.3L1484.5 163.6z"/></g>
<!-- support -->
<path d="M1567.7 146.6L1576.4 155.6L1567.7 164.4L1559 155.6z" stroke="#08073f" stroke-width="2.6" fill="none" stroke-linejoin="round"/>
<g fill="#08073f"><rect x="1554.9" y="160.2" width="3.3" height="11"/><rect x="1560.8" y="166.7" width="3" height="4.4"/><rect x="1566.2" y="168.6" width="3" height="2.5"/><rect x="1571.7" y="166.7" width="3" height="4.4"/><rect x="1577.1" y="160.2" width="3.3" height="11"/></g>
<!-- adhesion -->
<g stroke="#08073f" stroke-width="2.8" fill="none" stroke-linejoin="round">
<path d="M1702.8 145.4V160M1696.2 154.6L1702.8 161L1709.4 154.6"/>
<path d="M1693.2 157.6V161.5a2.2 2.2 0 0 0 2.2 2.2H1710.4a2.2 2.2 0 0 0 2.2-2.2V157.6"/>
</g>
<g fill="#08073f"><circle cx="1691.3" cy="170.2" r="1.4"/><circle cx="1697.1" cy="170.2" r="1.4"/><circle cx="1702.9" cy="170.2" r="1.4"/><circle cx="1708.6" cy="170.2" r="1.4"/><circle cx="1714.3" cy="170.2" r="1.4"/></g>
</svg>

<!-- left toolbar -->
<div class="a" style="left:-2px;top:376px;width:66.5px;height:388px;background:#fff;border:1px solid #d6d6d6;border-radius:0 5px 5px 0"></div>
<svg class="a" style="left:0;top:380px" width="64" height="380" viewBox="0 380 64 380">
<g stroke="#cbcbd3" stroke-width="2.6" fill="none">
<path d="M32.5 396V420M20.5 408H44.5"/>
<path d="M28 400.5L32.5 396L37 400.5M28 415.5L32.5 420L37 415.5M25 403.5L20.5 408L25 412.5M40 403.5L44.5 408L40 412.5"/>
<path d="M21.5 474V463a2 2 0 0 1 2-2h18a2 2 0 0 1 2 2v18a2 2 0 0 1-2 2h-11"/>
<path d="M21.5 474h9v9h-9z"/>
<path d="M31 473L40 464M34 464h6v6"/>
<path d="M24 529a10.5 10.5 0 1 1 3 14" stroke-dasharray="0"/>
<path d="M21 526V532H27"/>
</g>
<g fill="#cbcbd3">
<circle cx="22.5" cy="540" r="1.2"/><circle cx="26" cy="545" r="1.2"/><circle cx="31" cy="548" r="1.2"/><circle cx="36" cy="547.5" r="1.2"/><circle cx="40.5" cy="544" r="1.2"/><circle cx="43" cy="538.5" r="1.2"/>
<path d="M19.5 592L28.5 603.5L19.5 615z"/><path d="M45.5 592L36.5 603.5L45.5 615z"/>
<rect x="31.5" y="590" width="2" height="3"/><rect x="31.5" y="596" width="2" height="3"/><rect x="31.5" y="602" width="2" height="3"/><rect x="31.5" y="608" width="2" height="3"/><rect x="31.5" y="614" width="2" height="3"/>
</g>
<path d="M22 594.5L26 603.5L22 612.5z" fill="#fff"/>
<g fill="#cbcbd3">
<rect x="20.5" y="655" width="11" height="11" rx="1"/>
<path d="M20.5 670h11v11h-9a2 2 0 0 1-2-2z"/>
<rect x="34.5" y="670" width="11" height="11" rx="1"/>
<path d="M34.5 655h11v11h-11z" fill="none"/>
</g>
<rect x="23" y="657.5" width="6" height="6" fill="#fff"/>
<rect x="37" y="672.5" width="6" height="6" fill="#fff"/>
<path d="M36 664.5L44 656.5M36 659L39 656M41 665L45 661" stroke="#cbcbd3" stroke-width="2"/>
<g stroke="#cbcbd3" stroke-width="2.6" fill="none">
<path d="M32.5 721L42 730.5L32.5 740L23 730.5z"/>
</g>
<g fill="#cbcbd3"><rect x="20" y="735" width="2.6" height="10"/><rect x="25" y="740" width="2.6" height="5"/><rect x="30" y="742" width="2.6" height="3"/></g>
<path d="M37 738.5L43 744.5M43 738.5L37 744.5" stroke="#cbcbd3" stroke-width="2"/>
</svg>

<!-- object list bottom-left -->
<svg class="a" style="left:80px;top:830px" width="200" height="171" viewBox="80 830 200 171">
<path d="M84.5 838L89.5 843L94.5 838" stroke="#5a5a5a" stroke-width="1.6" fill="none"/>
<path d="M86 927.5L97.5 916L100 918.5L88.5 930H86z" fill="#606060"/>
<rect x="84" y="932" width="17" height="2" fill="#606060"/>
<g stroke="#666" stroke-width="2.6" stroke-linejoin="round" fill="none">
<path d="M97.7 985.5L108.3 991.3V1004M87 991.3L97.7 997.1L108.3 991.3M97.7 997.1V1004M87 1004V991.3L97.7 985.5"/>
<path d="M127 994.5L132.5 986.5H148.5L143 994.5z"/><path d="M148.5 986.5V1004"/>
<path d="M167 994.5L172.5 986.5H188.5L183 994.5z" fill="#666"/><path d="M188.5 986.5V1004M167 994.5V1004M183 994.5V1004"/>
<path d="M212 986.5H223L228.5 994.5H217.5z"/><path d="M228.5 994.5V1004M217.5 994.5V1004"/>
<path d="M247 994.5L252.5 986.5H268.5L263 994.5z"/><path d="M247 994.5V1004M263 994.5V1004"/>
</g>
<g fill="#666">
<rect x="125.5" y="993" width="19" height="12"/>
<path d="M206 1004V988.5a2 2 0 0 1 3-1.5l9.5 8V1004z"/>
<path d="M262 994.5l6.5-8 2 1.5V1004h-8.5z"/>
</g>
</svg>
<div class="a" style="left:81px;top:855.5px;width:243.5px;height:42px;background:#fff;border:1px solid #c6c6c6;border-radius:1px"></div>

<!-- print settings panel -->
<div class="a" style="left:1248px;top:223.8px;width:618.5px;height:630.2px;background:#fff;border:1px solid #cfcfcf;border-radius:3px;box-shadow:0 1px 3px rgba(0,0,0,.12)"></div>
<div class="a" style="left:1249px;top:271px;width:616.5px;height:1px;background:#cdcdcd"></div>
<div class="a" style="left:1395px;top:290.5px;width:372px;height:32px;background:#f2f2f2;border-bottom:1px solid #9e9e9e"></div>
<div class="a" style="left:1281px;top:338px;width:513px;height:39.5px;background:#f2f2f2;border-bottom:1px solid #9e9e9e"></div>
<div class="a" style="left:1281px;top:395px;width:536px;height:16.5px;background:#f2f2f2"></div>
<div class="a" style="left:1281px;top:572px;width:536px;height:1px;background:#d4d4d4"></div>
<div class="a" style="left:1249px;top:771.5px;width:616.5px;height:1px;background:#cdcdcd"></div>
<div class="a" style="left:1249px;top:845px;width:616.5px;height:9px;background:#e9e9e9;border-top:1px solid #d0d0d0"></div>
<div class="a" style="left:1265px;top:790px;width:175px;height:39.5px;border:2px solid #196ef0"></div>
<!-- inputs -->
<div class="a" style="left:1639px;top:416px;width:178px;height:31.5px;background:#f2f2f2;border-bottom:1px solid #a0a0a0"></div>
<div class="a" style="left:1639px;top:456px;width:178px;height:31.5px;background:#f2f2f2;border-bottom:1px solid #a0a0a0"></div>
<div class="a" style="left:1639px;top:501.5px;width:21px;height:21px;background:#fff;border:1px solid #b8b8b8;border-radius:3px"></div>
<div class="a" style="left:1639px;top:536px;width:178px;height:31.5px;background:#f2f2f2;border-bottom:1px solid #a0a0a0"></div>
<div class="a" style="left:1639px;top:616px;width:178px;height:31.5px;background:#f2f2f2;border-bottom:1px solid #a0a0a0"></div>
<div class="a" style="left:1639px;top:656px;width:178px;height:31.5px;background:#f2f2f2;border-bottom:1px solid #a0a0a0"></div>
<div class="a" style="left:1639px;top:696px;width:178px;height:31.5px;background:#f2f2f2;border-bottom:1px solid #a0a0a0"></div>
<div class="a" style="left:1639px;top:736px;width:178px;height:31.5px;background:#f2f2f2;border-bottom:1px solid #a0a0a0"></div>
<div class="a" style="left:1827.5px;top:439px;width:12.5px;height:37px;background:#08073f;border-radius:6px"></div>
<svg class="a" style="left:1240px;top:220px" width="640" height="640" viewBox="1240 220 640 640">
<path d="M1837.5 243L1848.5 254M1848.5 243L1837.5 254" stroke="#444" stroke-width="1.4"/>
<polygon points="1708.60,300.00 1710.72,305.29 1716.40,305.67 1712.02,309.31 1713.42,314.83 1708.60,311.80 1703.78,314.83 1705.18,309.31 1700.80,305.67 1706.48,305.29" fill="#5a5a5a" stroke="#5a5a5a" stroke-width="0.8" stroke-linejoin="round"/>
<path d="M1737.5 303.2L1743 308.7L1748.5 303.2" stroke="#5a5a5a" stroke-width="1.5" fill="none"/>
<path d="M1790 301.5H1796.2A7.6 7.6 0 1 1 1788.6 309.1" stroke="#196ef0" stroke-width="2.5" fill="none"/>
<path d="M1793.6 297.6L1789.7 301.5L1793.6 305.4" stroke="#196ef0" stroke-width="2.5" fill="none" stroke-linejoin="round" stroke-linecap="round"/>
<path d="M1829.5 300.5a1.5 1.5 0 0 1 1.5-1.5h12l3 3v13a1.5 1.5 0 0 1-1.5 1.5h-13.5a1.5 1.5 0 0 1-1.5-1.5z" stroke="#196ef0" stroke-width="2.4" fill="none"/>
<path d="M1833.5 299.5v5h8v-5M1833.5 316v-6.5h10.5V316" stroke="#196ef0" stroke-width="2.2" fill="none"/>
<circle cx="1312" cy="355" r="6.6" stroke="#222" stroke-width="2.2" fill="none"/>
<path d="M1307 360L1300.5 366.5" stroke="#222" stroke-width="2.6" stroke-linecap="round"/>
<path d="M1807 348.8H1831.5M1807 358.3H1831.5M1807 368.3H1831.5" stroke="#08073f" stroke-width="2.5"/>
<path d="M1293.2 380V399.2H1309.8V380" stroke="#222" stroke-width="2.4" fill="none"/><g fill="#555"><circle cx="1297.5" cy="393.5" r="0.9"/><circle cx="1301.5" cy="393.5" r="0.9"/><circle cx="1305.5" cy="393.5" r="0.9"/></g>
<path d="M1617.6 422.6C1614.5 422.4 1612.8 424 1612 427.5L1609.6 437.5C1608.9 440.6 1607.5 441.8 1604.6 441.7M1608.3 429.9H1614.2" stroke="#555" stroke-width="2.3" fill="none" stroke-linecap="round"/>
<path d="M1614.8 435.6L1619.2 440.2M1619.2 435.6L1614.8 440.2" stroke="#555" stroke-width="2.1" stroke-linecap="round"/>
<g fill="#222"><rect x="1292.5" y="582.5" width="18" height="2.4" rx="1"/><rect x="1292.5" y="598.5" width="18" height="2.4" rx="1"/>
<circle cx="1295" cy="588.5" r="1"/><circle cx="1299" cy="588.5" r="1"/><circle cx="1303" cy="588.5" r="1"/><circle cx="1307" cy="588.5" r="1"/>
<circle cx="1295" cy="594.5" r="1"/><circle cx="1299" cy="594.5" r="1"/><circle cx="1303" cy="594.5" r="1"/><circle cx="1307" cy="594.5" r="1"/></g>
<path d="M1796 588.5L1801.6 594.1L1807.2 588.5" stroke="#5a5a5a" stroke-width="1.5" fill="none"/>
<path d="M1299 802L1290 809.5L1299 817" stroke="#196ef0" stroke-width="2.2" fill="none"/>
<g fill="#b0b0b0"><rect x="1550" y="849" width="3" height="1.2"/><rect x="1556" y="849" width="3" height="1.2"/><rect x="1562" y="849" width="3" height="1.2"/></g>
</svg>

<!-- print summary -->
<div class="a" style="left:1470px;top:847.5px;width:421.5px;height:160px;background:#fff;border:1px solid #d0d0d0;border-radius:3px"></div>
<div class="a" style="left:1249px;top:845px;width:617px;height:9px;background:#e9e9e9;border-top:1px solid #d0d0d0;box-shadow:0 1px 2px rgba(0,0,0,.15)"></div>
<div class="a" style="left:1497.5px;top:943px;width:107.5px;height:39.5px;border:2px solid #196ef0;background:#fff"></div>
<div class="a" style="left:1621px;top:943px;width:244px;height:39.5px;background:#196ef0"></div>
<svg class="a" style="left:1490px;top:860px" width="380" height="120" viewBox="1490 860 380 120">
<circle cx="1509.7" cy="882.4" r="9" stroke="#08073f" stroke-width="2.5" fill="none"/>
<path d="M1509.5 876.5V883H1515" stroke="#08073f" stroke-width="2.5" fill="none"/>
<circle cx="1851.8" cy="882.4" r="9" stroke="#08073f" stroke-width="2.5" fill="none"/>
<path d="M1851.8 880.5V887.5" stroke="#08073f" stroke-width="2.6"/><circle cx="1851.8" cy="877" r="1.5" fill="#08073f"/>
<path d="M1502.5 924.5A9 9 0 1 1 1506 927" stroke="#08073f" stroke-width="2.5" fill="none"/>
<path d="M1501.2 921.5V928.5H1508" stroke="#08073f" stroke-width="2.5" fill="none"/>
<circle cx="1510.2" cy="917.8" r="2.6" stroke="#08073f" stroke-width="2.2" fill="none"/>
<path d="M1836 959L1844.8 967.5L1853.6 959" stroke="#fff" stroke-width="2.4" fill="none"/>
</svg>

<span class="t" style="left:27.40px;top:6.71px;font-size:15.70px;font-weight:400;font-style:normal;color:#000;transform:scaleX(0.9199);">CFFFP_cangrejo lightnight v0 - UltiMaker Cura</span>
<span class="t" style="left:16.00px;top:37.81px;font-size:15.10px;font-weight:400;font-style:normal;color:#000;transform:scaleX(0.9472);">Archivo</span>
<span class="t" style="left:95.74px;top:37.81px;font-size:15.10px;font-weight:400;font-style:normal;color:#000;transform:scaleX(0.9561);">Edición</span>
<span class="t" style="left:175.70px;top:37.81px;font-size:15.10px;font-weight:400;font-style:normal;color:#000;transform:scaleX(0.9545);">Ver</span>
<span class="t" style="left:230.00px;top:37.81px;font-size:15.10px;font-weight:400;font-style:normal;color:#000;transform:scaleX(0.9397);">Ajustes</span>
<span class="t" style="left:308.35px;top:37.81px;font-size:15.10px;font-weight:400;font-style:normal;color:#000;transform:scaleX(0.9469);">Extensiones</span>
<span class="t" style="left:418.35px;top:37.81px;font-size:15.10px;font-weight:400;font-style:normal;color:#000;transform:scaleX(0.9497);">Preferencias</span>
<span class="t" style="left:531.00px;top:37.81px;font-size:15.10px;font-weight:400;font-style:normal;color:#000;transform:scaleX(0.9205);">Ayuda</span>
<span class="t" style="left:79.93px;top:80.63px;font-size:27.60px;font-weight:400;font-style:normal;color:#fff;transform:scaleX(0.8848);-webkit-text-stroke:0.6px #fff;">UltiMaker Cura</span>
<span class="t" style="left:747.89px;top:86.04px;font-size:17.90px;font-weight:400;font-style:normal;color:#08073f;transform:scaleX(0.8069);">PREPARAR</span>
<span class="t" style="left:901.00px;top:86.04px;font-size:17.90px;font-weight:400;font-style:normal;color:#fff;transform:scaleX(0.8345);">VISTA PREVIA</span>
<span class="t" style="left:1076.30px;top:86.04px;font-size:17.90px;font-weight:400;font-style:normal;color:#fff;transform:scaleX(0.8142);">SUPERVISAR</span>
<span class="t" style="left:1658.40px;top:87.57px;font-size:14.80px;font-weight:400;font-style:normal;color:#fff;transform:scaleX(0.9954);">Marketplace</span>
<span class="t" style="left:1813.31px;top:87.57px;font-size:14.80px;font-weight:400;font-style:normal;color:#fff;transform:scaleX(0.9880);">Iniciar sesión</span>
<span class="t" style="left:170.50px;top:149.59px;font-size:18.20px;font-weight:400;font-style:normal;color:#191919;transform:scaleX(0.9242);">Anycubic Kobra Neo #2</span>
<span class="t" style="left:583.60px;top:151.92px;font-size:14.50px;font-weight:400;font-style:normal;color:#191919;transform:scaleX(0.9341);">Generic PLA</span>
<span class="t" style="left:1300.29px;top:151.76px;font-size:16.70px;font-weight:400;font-style:normal;color:#191919;transform:scaleX(1.0085);">Kobra Ne... - 0.2mm</span>
<span class="t" style="left:1499.50px;top:151.76px;font-size:16.70px;font-weight:400;font-style:normal;color:#191919;transform:scaleX(0.9088);">20%</span>
<span class="t" style="left:1590.58px;top:151.76px;font-size:16.70px;font-weight:400;font-style:normal;color:#191919;transform:scaleX(1.0182);">Encendido</span>
<span class="t" style="left:1725.51px;top:151.76px;font-size:16.70px;font-weight:400;font-style:normal;color:#191919;transform:scaleX(0.9948);">Encendi...</span>
<span class="t" style="left:1264.00px;top:239.16px;font-size:18.00px;font-weight:400;font-style:normal;color:#191919;transform:scaleX(0.9562);">Ajustes de impresión</span>
<span class="t" style="left:1264.59px;top:298.77px;font-size:17.40px;font-weight:400;font-style:normal;color:#191919;transform:scaleX(1.0144);">Perfil</span>
<span class="t" style="left:1410.45px;top:298.91px;font-size:15.10px;font-weight:400;font-style:normal;color:#191919;transform:scaleX(0.9515);">Kobra Neo Suggested param...</span>
<span class="t" style="left:1616.90px;top:299.51px;font-size:15.10px;font-weight:400;font-style:normal;color:#c4c4c4;transform:scaleX(0.9338);">- Draft - 0.2...</span>
<span class="t" style="left:1339.30px;top:354.41px;font-size:15.10px;font-weight:400;font-style:italic;color:#b4b4b4;transform:scaleX(0.8748);">Buscar ajustes</span>
<span class="t" style="left:1320.30px;top:383.94px;font-size:16.60px;font-weight:700;font-style:normal;color:#191919;transform:scaleX(1.0000);">Paredes</span>
<span class="t" style="left:1293.40px;top:424.21px;font-size:15.10px;font-weight:400;font-style:italic;color:#191919;transform:scaleX(0.8968);">Grosor de la pared</span>
<span class="t" style="left:1309.40px;top:464.11px;font-size:15.10px;font-weight:400;font-style:italic;color:#191919;transform:scaleX(0.8784);">Recuento de líneas de pared</span>
<span class="t" style="left:1293.40px;top:504.11px;font-size:15.10px;font-weight:400;font-style:italic;color:#191919;transform:scaleX(0.9065);">Optimizar el orden de impresión de paredes</span>
<span class="t" style="left:1292.43px;top:544.01px;font-size:15.10px;font-weight:400;font-style:normal;color:#191919;transform:scaleX(0.9685);">Expansión horizontal</span>
<span class="t" style="left:1321.30px;top:583.74px;font-size:16.60px;font-weight:700;font-style:normal;color:#191919;transform:scaleX(0.9945);">Superior o inferior</span>
<span class="t" style="left:1293.40px;top:624.41px;font-size:15.10px;font-weight:400;font-style:italic;color:#191919;transform:scaleX(0.9308);">Grosor superior/inferior</span>
<span class="t" style="left:1309.00px;top:664.41px;font-size:15.10px;font-weight:400;font-style:normal;color:#191919;transform:scaleX(0.9692);">Grosor superior</span>
<span class="t" style="left:1325.30px;top:704.41px;font-size:15.10px;font-weight:400;font-style:normal;color:#191919;transform:scaleX(0.9367);">Capas superiores</span>
<span class="t" style="left:1309.00px;top:744.41px;font-size:15.10px;font-weight:400;font-style:normal;color:#191919;transform:scaleX(0.9826);">Grosor inferior</span>
<span class="t" style="left:1646.40px;top:425.15px;font-size:14.00px;font-weight:400;font-style:normal;color:#191919;transform:scaleX(0.9453);">0.8</span>
<span class="t" style="left:1646.40px;top:465.15px;font-size:14.00px;font-weight:400;font-style:normal;color:#191919;transform:scaleX(0.9453);">2</span>
<span class="t" style="left:1646.40px;top:545.15px;font-size:14.00px;font-weight:400;font-style:normal;color:#191919;transform:scaleX(0.9453);">0.0</span>
<span class="t" style="left:1645.45px;top:625.15px;font-size:14.00px;font-weight:400;font-style:normal;color:#191919;transform:scaleX(0.9453);">1.2</span>
<span class="t" style="left:1645.45px;top:665.15px;font-size:14.00px;font-weight:400;font-style:normal;color:#191919;transform:scaleX(0.9453);">1.2</span>
<span class="t" style="left:1645.45px;top:705.15px;font-size:14.00px;font-weight:400;font-style:normal;color:#191919;transform:scaleX(0.9453);">12</span>
<span class="t" style="left:1645.45px;top:745.15px;font-size:14.00px;font-weight:400;font-style:normal;color:#191919;transform:scaleX(0.9453);">1.2</span>
<span class="t" style="left:1784.80px;top:425.15px;font-size:14.00px;font-weight:400;font-style:normal;color:#8c8c8c;transform:scaleX(1.0590);">mm</span>
<span class="t" style="left:1784.80px;top:545.15px;font-size:14.00px;font-weight:400;font-style:normal;color:#8c8c8c;transform:scaleX(1.0590);">mm</span>
<span class="t" style="left:1784.80px;top:625.15px;font-size:14.00px;font-weight:400;font-style:normal;color:#8c8c8c;transform:scaleX(1.0590);">mm</span>
<span class="t" style="left:1784.80px;top:665.15px;font-size:14.00px;font-weight:400;font-style:normal;color:#8c8c8c;transform:scaleX(1.0590);">mm</span>
<span class="t" style="left:1784.80px;top:745.15px;font-size:14.00px;font-weight:400;font-style:normal;color:#8c8c8c;transform:scaleX(1.0590);">mm</span>
<span class="t" style="left:1313.48px;top:800.94px;font-size:18.50px;font-weight:400;font-style:normal;color:#196ef0;transform:scaleX(0.9186);">Recomendado</span>
<span class="t" style="left:1529.90px;top:873.81px;font-size:18.30px;font-weight:700;font-style:normal;color:#000;transform:scaleX(0.9155);">57 minutos</span>
<span class="t" style="left:1529.90px;top:911.08px;font-size:16.20px;font-weight:400;font-style:normal;color:#191919;transform:scaleX(0.8489);">3g · 1.12m · € 0.05</span>
<span class="t" style="left:1516.80px;top:954.01px;font-size:18.30px;font-weight:400;font-style:normal;color:#196ef0;transform:scaleX(0.9199);">Vista pr...</span>
<span class="t" style="left:1638.70px;top:954.01px;font-size:18.30px;font-weight:400;font-style:normal;color:#fff;transform:scaleX(0.9326);">Guardar en unidad e...</span>
<span class="t" style="left:113.27px;top:835.96px;font-size:14.10px;font-weight:400;font-style:normal;color:#5a5a5a;transform:scaleX(1.0258);">Lista de objetos</span>
<span class="t" style="left:88.50px;top:868.55px;font-size:16.00px;font-weight:400;font-style:normal;color:#505050;transform:scaleX(0.9275);">cangrejo lightnight v0.stl</span>
<span class="t" style="left:122.70px;top:915.06px;font-size:14.10px;font-weight:400;font-style:normal;color:#5a5a5a;transform:scaleX(0.9893);">CFFFP_cangrejo lightnight v0</span>
<span class="t" style="left:81.40px;top:948.57px;font-size:13.50px;font-weight:400;font-style:normal;color:#4a4a4a;transform:scaleX(1.0418);">41.6 x 23.7 x 13.0 mm</span>
<div class="a" style="left:1281px;top:378.5px;width:536px;height:16.5px;background:#fff"></div>

</body></html>
